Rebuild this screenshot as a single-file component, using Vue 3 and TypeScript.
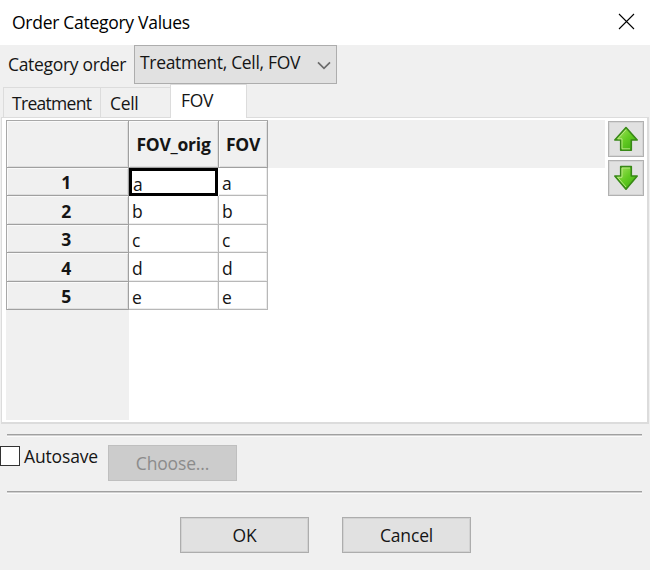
<script setup lang="ts">
import { ref } from 'vue'

const tabs = ['Treatment', 'Cell', 'FOV']
const active = ref('FOV')
const rows = ['a', 'b', 'c', 'd', 'e']
const autosave = ref(false)
</script>

<template>
  <div class="dialog">
    <header class="titlebar">
      <span class="title">Order Category Values</span>
      <svg class="close" width="17" height="17" viewBox="0 0 17 17">
        <path d="M1 1 L16 16 M16 1 L1 16" stroke="#000" stroke-width="1.1" fill="none" />
      </svg>
    </header>

    <div class="order">
      <span class="order-label">Category order</span>
      <div class="combo">
        <span class="combo-text">Treatment, Cell, FOV</span>
        <svg width="14" height="9" viewBox="0 0 14 9">
          <path d="M1 1.3 L7 7.3 L13 1.3" stroke="#6b6b6b" stroke-width="1.7" fill="none" />
        </svg>
      </div>
    </div>

    <nav class="tabs">
      <div
        v-for="t in tabs"
        :key="t"
        class="tab"
        :class="[t.toLowerCase(), { active: t === active }]"
        @click="active = t"
      ><span>{{ t }}</span></div>
    </nav>

    <section class="page">
      <div class="sheet">
        <div class="grid">
          <div class="cell head"></div>
          <div class="cell head title-cell"><span>FOV_orig</span></div>
          <div class="cell head title-cell"><span>FOV</span></div>
          <template v-for="(r, i) in rows" :key="r">
            <div class="cell head">{{ i + 1 }}</div>
            <div class="cell" :class="{ selected: i === 0 }">{{ r }}</div>
            <div class="cell">{{ r }}</div>
          </template>
        </div>
        <div class="col-rest"></div>
        <div class="row-rest"></div>
      </div>
      <div class="movers">
        <button v-for="d in ['up', 'down']" :key="d" class="mover" :class="d">
          <svg width="26" height="26" viewBox="0 0 26 26">
            <defs>
              <linearGradient :id="'g' + d" x1="0" y1="0" x2="1" y2="1">
                <stop offset="0" stop-color="#b2e66c" />
                <stop offset="0.5" stop-color="#65cc24" />
                <stop offset="1" stop-color="#37a80b" />
              </linearGradient>
            </defs>
            <path
              v-if="d === 'up'"
              d="M13 1.5 L24.2 14 H18.3 V24.2 H7.7 V14 H1.8 Z"
              :fill="`url(#g${d})`" stroke="#388817" stroke-width="1.6" stroke-linejoin="round"
            />
            <path
              v-else
              d="M7.7 1.6 H18.3 V11 H24.2 L13 24.2 L1.8 11 H7.7 Z"
              :fill="`url(#g${d})`" stroke="#388817" stroke-width="1.6" stroke-linejoin="round"
            />
            <path v-if="d === 'up'" d="M13 3.8 L4.8 12.8 H9 V22.8 H17" fill="none" stroke="#bdeb88" stroke-width="0.9" />
            <path v-else d="M17 3 H9 V12.3 H4.6 L13 22" fill="none" stroke="#bdeb88" stroke-width="0.9" />
          </svg>
        </button>
      </div>
    </section>

    <div class="rule first"></div>

    <div class="save">
      <label class="auto">
        <input v-model="autosave" type="checkbox" />
        <span>Autosave</span>
      </label>
      <button class="btn choose" disabled><span>Choose...</span></button>
    </div>

    <div class="rule second"></div>

    <footer class="actions">
      <button class="btn"><span class="ok">OK</span></button>
      <button class="btn"><span class="cancel">Cancel</span></button>
    </footer>
  </div>
</template>

<style>
body {
  margin: 0;
  background: #f0f0f0;
}
</style>

<style scoped>
.dialog {
  width: 650px;
  height: 570px;
  overflow: hidden;
  display: flex;
  flex-direction: column;
  background: #f0f0f0;
  color: #151515;
  font: 17.5px/24px 'Open Sans', 'Noto Sans', sans-serif;
  letter-spacing: -0.32px;
  white-space: nowrap;
}
.dialog * {
  box-sizing: border-box;
}
.titlebar {
  height: 45px;
  flex: none;
  display: flex;
  justify-content: space-between;
  padding: 10px 15px 0 12px;
  background: #fff;
  color: #000;
  letter-spacing: -0.28px;
}
.close {
  margin-top: 3px;
}
.order {
  height: 39px;
  flex: none;
  display: flex;
}
.order-label {
  width: 126px;
  margin-left: 8px;
  padding-top: 7px;
}
.combo {
  width: 203px;
  height: 39px;
  display: flex;
  justify-content: space-between;
  padding: 4px 5px 0;
  border: 1px solid #adadad;
  background: #e1e1e1;
}
.combo svg {
  margin-top: 11px;
}
.tabs {
  height: 33px;
  flex: none;
  display: flex;
  align-items: flex-end;
  padding-left: 3px;
}
.tab {
  height: 30px;
  padding: 3px 0 0 9px;
  border: 1px solid #dcdcdc;
  border-right: 0;
  border-bottom: 0;
}
.tab.treatment {
  width: 97px;
  padding-left: 8px;
  letter-spacing: -0.7px;
}
.tab.cell {
  width: 70px;
}
.tab.active {
  width: 77px;
  height: 34px;
  padding: 3px 0 0 10px;
  margin-bottom: -1px;
  border-right: 1px solid #dcdcdc;
  background: #fff;
  position: relative;
  z-index: 1;
}
.page {
  width: 648px;
  height: 307px;
  flex: none;
  display: flex;
  margin-left: 1px;
  padding: 3px 3px 3px 4px;
  border: 1px solid #dcdcdc;
  border-width: 1px 2px 2px 1px;
  background: #fff;
}
.sheet {
  width: 599px;
  height: 300px;
  margin-top: -1px;
  display: grid;
  grid-template: 190px 110px / 262px 337px;
}
.grid {
  display: grid;
  grid-template-columns: 122px 90px 49px;
  grid-template-rows: 47px 28px 29px 28px 29px 28px;
  border-left: 1px solid #a8a8a8;
  border-top: 1px solid #a8a8a8;
}
.grid .cell {
  display: flex;
  align-items: center;
  padding: 2px 0 0 3px;
  border: 1px solid #b8b8b8;
  border-width: 0 1px 1px 0;
  background: #fff;
  box-shadow: inset -1px -1px #ececec;
  line-height: 20px;
}
.grid .head {
  justify-content: center;
  padding: 1px 3px 0 0;
  border-color: #a0a0a0;
  background: #f0f0f0;
  box-shadow: inset 1px 1px #fafafa, inset -1px -1px #dedede;
  font-weight: 700;
}
.grid .title-cell {
  padding: 0;
  letter-spacing: -0.25px;
}
.grid .selected {
  margin-right: 1px;
  border: 3px solid #000;
  padding: 3px 0 0 1px;
  box-shadow: none;
}
.col-rest {
  height: 48px;
  background: #f0f0f0;
}
.row-rest {
  width: 123px;
  background: #f0f0f0;
}
.movers {
  display: flex;
  flex-direction: column;
  gap: 3px;
  padding: 0 0 0 3px;
}
.mover {
  width: 36px;
  height: 36px;
  padding: 0;
  display: flex;
  align-items: center;
  justify-content: center;
  border: 1px solid #b1b1b1;
  background: #e1e1e1;
  box-shadow: inset 0 0 0 1px #d4d4d4;
}
.rule {
  width: 635px;
  height: 3px;
  flex: none;
  margin-left: 7px;
  border-top: 1px solid #a0a0a0;
  border-bottom: 1px solid #fbfbfb;
  background: #d0d0d0;
}
.first {
  margin-top: 10px;
}
.save {
  height: 54px;
  flex: none;
  display: flex;
}
.auto {
  width: 108px;
  display: flex;
  padding-top: 9px;
  letter-spacing: -0.15px;
}
.auto input {
  appearance: none;
  width: 20px;
  height: 20px;
  margin: 0;
  border: 1.5px solid #333;
  background: #fff;
}
.auto span {
  margin: -2px 0 0 4px;
}
.btn {
  width: 129px;
  height: 36px;
  padding: 0;
  border: 1px solid #adadad;
  background: #e1e1e1;
  box-shadow: inset 0 0 0 1px #d2d2d2;
  color: #151515;
  font: inherit;
  letter-spacing: -0.15px;
}
.choose {
  margin-top: 8px;
  border-color: #bfbfbf;
  background: #ccc;
  box-shadow: none;
  color: #8b8b8b;
}
.actions {
  display: flex;
  gap: 33px;
  padding: 23px 0 0 180px;
}
</style>
